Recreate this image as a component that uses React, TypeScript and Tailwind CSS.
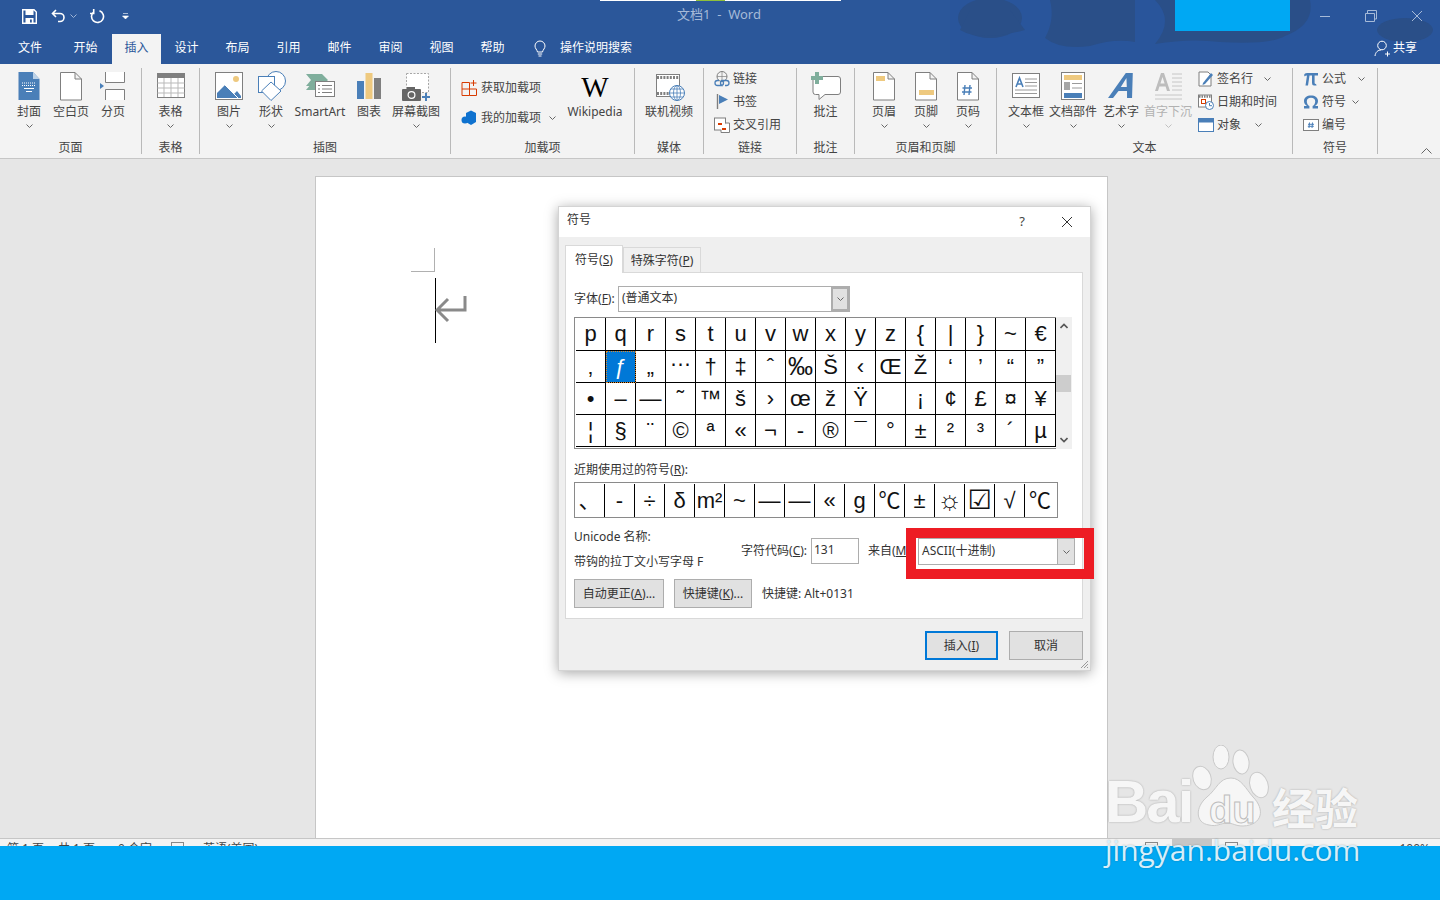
import React from 'react';

// small chevrons used all over the ribbon and dialog
function Chev({ className = 'text-[#666]' }: { className?: string }) {
  return (
    <svg width="7" height="4" viewBox="0 0 7 4" className={className}>
      <path d="M0.5 0.5 L3.5 3.5 L6.5 0.5" fill="none" stroke="currentColor" strokeWidth="1" />
    </svg>
  );
}

const BLUE = '#4a7fb8';
const GRAY = '#7f7f7f';
const TAN = '#eec97f';
const TEAL = '#7fae9c';

const icons: Record<string, React.ReactNode> = {
  cover: (
    <>
      <path d="M5.5 2 H20 L26.5 9 V30 H5.5 Z" fill={BLUE} />
      <path d="M20 2 L26.5 9 H20 Z" fill="#bcd2e8" />
      <path d="M9 13 H23 M9 15.5 H23" stroke="#fff" strokeWidth="1.2" strokeDasharray="1 1" />
      <path d="M11 18.5 H21 M13 21.5 H19" stroke="#fff" strokeWidth="1" />
    </>
  ),
  blank: <path d="M5.5 2.5 H20 L26.5 9 V30 H5.5 Z M20 2.5 V9 H26.5" fill="#fff" stroke={GRAY} />,
  pagebreak: (
    <>
      <path d="M8.5 2 V12.5 H27.5 V2" fill="#fff" stroke={GRAY} />
      <path d="M8.5 30 V19.5 H27.5 V30" fill="#fff" stroke={GRAY} />
      <path d="M3 13 L7 16 L3 19 Z" fill={BLUE} />
    </>
  ),
  table: (
    <>
      <rect x="2.5" y="3.5" width="27" height="24" fill="#fff" stroke={GRAY} />
      <rect x="2" y="3" width="28" height="5" fill={GRAY} />
      <path d="M2.5 13 H29.5 M2.5 18 H29.5 M2.5 23 H29.5 M9 8 V27 M16 8 V27 M23 8 V27" stroke="#b9b9b9" />
    </>
  ),
  picture: (
    <>
      <rect x="2.5" y="2.5" width="27" height="27" fill="#fff" stroke={GRAY} />
      <circle cx="23" cy="9" r="3" fill={TAN} />
      <path d="M4 28 V23 L12 15 L21 24 L24 21 L28 26 V28 Z" fill={BLUE} />
      <path d="M12 15 L25 28" stroke="#fff" />
    </>
  ),
  shape: (
    <>
      <circle cx="21" cy="11" r="9.5" fill="#fff" stroke={BLUE} />
      <rect x="3.5" y="6.5" width="16" height="16" fill="#fff" stroke={BLUE} />
      <path d="M16 12 L26 21 L16 30.5 L6.5 21 Z" fill="#fff" stroke={BLUE} />
    </>
  ),
  smartart: (
    <>
      <path d="M2 4 H18 L24 10 L18 16 H2 L7 10 Z" fill={TEAL} />
      <path d="M2 20 L7 14 H12 V20 Z" fill={TEAL} />
      <rect x="11.5" y="11.5" width="19" height="15" fill="#fff" stroke={GRAY} />
      <path d="M14 15.5 H16 M18 15.5 H28 M14 19 H16 M18 19 H28 M14 22.5 H16 M18 22.5 H28" stroke={GRAY} />
    </>
  ),
  chart: (
    <>
      <rect x="4" y="11" width="7" height="18" fill={BLUE} />
      <rect x="12.5" y="3" width="7" height="26" fill={TAN} />
      <rect x="21" y="8" width="7" height="21" fill={GRAY} />
    </>
  ),
  screenshot: (
    <>
      <rect x="6.5" y="3.5" width="22" height="19" fill="#fff" stroke="#a6a6a6" strokeDasharray="2 1.5" />
      <rect x="2" y="19" width="19" height="12" rx="1" fill="#666" />
      <rect x="7" y="17" width="8" height="3" fill="#666" />
      <circle cx="11.5" cy="25" r="3.4" fill="#666" stroke="#fff" strokeWidth="1.2" />
      <path d="M22 27 H30 M26 23 V31" stroke={BLUE} strokeWidth="2" />
    </>
  ),
  video: (
    <>
      <rect x="3.5" y="4.5" width="23" height="22" fill="#fff" stroke={GRAY} />
      <path d="M4 7.5 H26 M4 23.5 H26" stroke={GRAY} strokeWidth="3" strokeDasharray="2 1.2" />
      <circle cx="24" cy="23" r="7.5" fill="#fff" stroke={BLUE} />
      <path d="M16.5 23 H31.5 M24 15.5 V30.5 M18 19 H30 M18 27 H30" stroke={BLUE} strokeWidth="0.8" />
      <ellipse cx="24" cy="23" rx="3.5" ry="7.5" fill="none" stroke={BLUE} strokeWidth="0.8" />
    </>
  ),
  comment: (
    <>
      <path d="M5.5 6.5 H28 Q30.5 6.5 30.5 9 V22 Q30.5 24.5 28 24.5 H15 L9 29.5 V24.5 H5.5 Q3 24.5 3 22 V9 Q3 6.5 5.5 6.5 Z" fill="#fff" stroke={GRAY} />
      <path d="M1 8 H13 M7 2 V14" stroke={TEAL} strokeWidth="4" />
    </>
  ),
  header: (
    <>
      <path d="M5.5 2.5 H20 L26.5 9 V30 H5.5 Z M20 2.5 V9 H26.5" fill="#fff" stroke={GRAY} />
      <rect x="8" y="6" width="9" height="5" fill={TAN} />
    </>
  ),
  footer: (
    <>
      <path d="M5.5 2.5 H20 L26.5 9 V30 H5.5 Z M20 2.5 V9 H26.5" fill="#fff" stroke={GRAY} />
      <rect x="9" y="20" width="15" height="5" fill={TAN} />
    </>
  ),
  pageno: (
    <>
      <path d="M5.5 2.5 H20 L26.5 9 V30 H5.5 Z M20 2.5 V9 H26.5" fill="#fff" stroke={GRAY} />
      <path d="M13 15 L12 25 M18 15 L17 25 M10.5 18 H20 M10 22 H19.5" stroke={BLUE} strokeWidth="1.4" />
    </>
  ),
  textbox: (
    <>
      <rect x="2.5" y="3.5" width="27" height="24" fill="#fff" stroke={GRAY} />
      <path d="M6 17 L9.5 8 L13 17 M7.2 14 H11.8" fill="none" stroke={BLUE} strokeWidth="1.6" />
      <path d="M15 9 H27 M15 12.5 H27 M15 16 H27 M5 20 H27 M5 23.5 H27" stroke="#9a9a9a" />
    </>
  ),
  parts: (
    <>
      <rect x="4.5" y="2.5" width="23" height="27" fill="#fff" stroke={GRAY} />
      <rect x="7" y="5" width="18" height="5" fill={TAN} />
      <rect x="7" y="12" width="6" height="8" fill="#a6a6a6" />
      <path d="M15 13.5 H25 M15 18 H25" stroke="#9a9a9a" />
      <rect x="7" y="23" width="18" height="5" fill={BLUE} />
    </>
  ),
  wordart: (
    <path d="M19 3 H26 L27 28 H22 L21.5 21 H13 L8 28 H3 Z M20 8 L15 17 H21 Z" fill={BLUE} fillRule="evenodd" transform="skewX(-4) translate(2 0)" />
  ),
  dropcap: (
    <>
      <path d="M3 21 L9 3 H12 L18 21 H15 L13.6 16.5 H7.4 L6 21 Z M8.4 13.5 H12.6 L10.5 7 Z" fill="#bdbdbd" fillRule="evenodd" />
      <path d="M20 4 H30 M20 8 H30 M20 12 H30 M20 16 H30 M20 20 H30 M3 25 H30 M3 29 H30" stroke="#c6c6c6" />
    </>
  ),
};

function Big({ icon, label, w = 42, chev = true, dim = false }: { icon: string; label: string; w?: number; chev?: boolean; dim?: boolean }) {
  return (
    <div className="flex flex-col items-center pt-[2px] shrink-0" style={{ width: w }}>
      <svg width="32" height="32" viewBox="0 0 32 32">{icons[icon]}</svg>
      <div className={`h-[17px] mt-[1px] leading-[17px] whitespace-nowrap ${dim ? 'text-[#b1b1b1]' : ''}`}>{label}</div>
      {chev && (
        <div className="mt-[4px] leading-none">
          <Chev className={dim ? 'text-[#c0c0c0]' : 'text-[#666]'} />
        </div>
      )}
    </div>
  );
}

function Small({ icon, label, chevGap, gap = 3 }: { icon: React.ReactNode; label: string; chevGap?: number; gap?: number }) {
  return (
    <div className="flex items-center h-[20px]">
      <svg width="16" height="16" viewBox="0 0 16 16" className="shrink-0">{icon}</svg>
      <span className="leading-[20px] whitespace-nowrap" style={{ marginLeft: gap }}>{label}</span>
      {chevGap !== undefined && (
        <span className="flex" style={{ marginLeft: chevGap }}>
          <Chev />
        </span>
      )}
    </div>
  );
}

function Group({ w, label, className = '', children }: { w: number; label: string; className?: string; children: React.ReactNode }) {
  return (
    <div className="flex flex-col h-[86px] mt-1 border-r border-[#b9b9b9] shrink-0" style={{ width: w }}>
      <div className={`flex h-[70px] ${className}`}>{children}</div>
      <div className="text-center leading-[19px] h-[16px]">{label}</div>
    </div>
  );
}

const tabs: [string, number][] = [
  ['文件', 60], ['开始', 52], ['插入', 49], ['设计', 51], ['布局', 51], ['引用', 51], ['邮件', 51], ['审阅', 51], ['视图', 51], ['帮助', 51],
];

function TitleBar() {
  return (
    <div className="relative h-[64px] bg-[#2b579a] text-white overflow-hidden shrink-0">
      {/* cloud backdrop of the office theme */}
      <svg className="absolute left-[950px] top-0" width="490" height="64" viewBox="0 0 490 64">
        <rect x="0" y="0" width="490" height="64" fill="#29559b" />
        <g fill="#2a4f88">
          <ellipse cx="40" cy="18" rx="32" ry="20" />
          <path d="M10 30 Q30 42 75 30 L60 10 L20 10 Z" />
          <path d="M100 0 H185 V42 Q165 38 140 46 Q110 50 95 38 Q105 20 100 0 Z" />
          <path d="M205 0 H360 Q365 25 335 36 Q320 45 270 42 Q240 38 205 44 Q225 20 205 0 Z" />
          <ellipse cx="455" cy="30" rx="28" ry="12" />
        </g>
      </svg>
      <div className="absolute left-[600px] top-0 w-[241px] h-[1px] bg-white" />
      <div className="absolute left-[696px] top-0 w-[29px] h-[1px] bg-[#8fbf3a]" />
      <div className="absolute left-[1175px] top-0 w-[115px] h-[31px] bg-[#00a8f3]" />

      {/* quick access + title + window buttons */}
      <div className="relative flex items-center h-[32px] pl-[22px]">
        <svg width="15" height="15" viewBox="0 0 15 15">
          <path d="M0.7 0.7 H12 L14.3 3 V14.3 H0.7 Z" fill="none" stroke="#fff" strokeWidth="1.4" />
          <rect x="3.5" y="1" width="8" height="5" fill="#fff" />
          <rect x="3.5" y="9" width="8" height="5" fill="#fff" />
          <rect x="8" y="10.5" width="1.8" height="3" fill="#2b579a" />
        </svg>
        <svg width="15" height="14" viewBox="0 0 15 14" className="ml-[14px]">
          <path d="M5 1 L1.5 4.5 L5 8 M2 4.5 H9 A4 4 0 0 1 9 12.5 H7" fill="none" stroke="#fff" strokeWidth="1.6" />
        </svg>
        <span className="flex ml-[4px]"><Chev className="text-[#9fb5d6]" /></span>
        <svg width="15" height="15" viewBox="0 0 15 15" className="ml-[13px]">
          <path d="M9.5 1.8 A6 6 0 1 1 4 2.6 M3.7 0 V4.5 H0" fill="none" stroke="#fff" strokeWidth="1.6" />
        </svg>
        <svg width="7" height="7" viewBox="0 0 7 7" className="ml-[17px]">
          <path d="M1 0.5 H6 M0.5 3 H6.5 L3.5 6 Z" fill="#fff" stroke="#fff" strokeWidth="0.6" />
        </svg>
        <div className="absolute left-[677px] top-[5px] text-[13px] leading-[18px] text-[#a6bad8] whitespace-pre">文档1  -  Word</div>
        <div className="ml-auto flex items-center text-[#a6bad8]">
          <svg width="46" height="14" viewBox="0 0 46 14"><path d="M18 7.5 H28" stroke="currentColor" /></svg>
          <svg width="46" height="14" viewBox="0 0 46 14" className="-ml-[1px]"><path d="M18.5 4.5 H27.5 V12.5 H18.5 Z M20.5 4 V1.5 H29.5 V10 H27.5" fill="none" stroke="currentColor" /></svg>
          <svg width="46" height="14" viewBox="0 0 46 14" className="ml-[1px]"><path d="M18 2 L28 12 M28 2 L18 12" stroke="currentColor" /></svg>
        </div>
      </div>

      {/* tab strip */}
      <div className="relative flex h-[32px] text-[12px]">
        {tabs.map(([t, w]) => (
          <div
            key={t}
            style={{ width: w }}
            className={`text-center shrink-0 ${t === '插入' ? 'bg-[#f3f3f3] text-[#2b579a] mt-[2px] h-[30px] leading-[28px]' : 'leading-[32px]'} ${t === '开始' ? 'pr-[1px]' : ''}`}
          >
            {t}
          </div>
        ))}
        <svg width="16" height="18" viewBox="0 0 16 18" className="ml-[14px] mt-[8px]">
          <path d="M5.5 12 C5 9.5 3 8.5 3 6 A5 5 0 0 1 13 6 C13 8.5 11 9.5 10.5 12 Z M5.8 14 H10.2 M6.5 16 H9.5" fill="none" stroke="#fff" />
        </svg>
        <div className="ml-[12px] leading-[32px]">操作说明搜索</div>
        <div className="ml-auto flex items-center h-[32px] pr-[23px]">
          <svg width="17" height="17" viewBox="0 0 17 17">
            <circle cx="8" cy="5.5" r="4.3" fill="none" stroke="#fff" />
            <path d="M1 16 C1.5 12 4 10 7 10 M11 14 H16 M13.5 11.5 V16.5" fill="none" stroke="#fff" />
          </svg>
          <span className="ml-[2px] leading-[32px]">共享</span>
        </div>
      </div>
    </div>
  );
}

function Ribbon() {
  return (
    <div className="relative flex h-[95px] bg-[#f3f3f3] border-b border-[#c6c6c6] text-[12px] text-[#444] shrink-0">
      <Group w={142} label="页面" className="pl-[8px]">
        <Big icon="cover" label="封面" />
        <Big icon="blank" label="空白页" chev={false} />
        <Big icon="pagebreak" label="分页" chev={false} />
      </Group>
      <Group w={58} label="表格" className="justify-center">
        <Big icon="table" label="表格" />
      </Group>
      <Group w={251} label="插图" className="pl-[8px]">
        <Big icon="picture" label="图片" />
        <Big icon="shape" label="形状" />
        <Big icon="smartart" label="SmartArt" w={56} chev={false} />
        <Big icon="chart" label="图表" chev={false} />
        <Big icon="screenshot" label="屏幕截图" w={52} />
      </Group>
      <Group w={184} label="加载项" className="pl-[10px]">
        <div className="flex flex-col gap-[10px] pt-[10px] w-[103px] shrink-0">
          <Small
            gap={4}
            label="获取加载项"
            icon={<path d="M1 2.5 H8.5 V15.5 H1 Z M1 9 H15.5 V15.5 H8.5 M12.5 0 V6 M9.5 3 H15.5" fill="none" stroke="#d83b01" />}
          />
          <Small
            gap={4}
            label="我的加载项"
            chevGap={8}
            icon={
              <>
                <path d="M5 3 L10 0.5 L15 3 V12 L10 15 L5 12 Z" fill="#0f72cf" />
                <circle cx="4" cy="10" r="3.5" fill="#0f72cf" />
              </>
            }
          />
        </div>
        <div className="flex flex-col items-center w-[62px] pt-[2px] shrink-0">
          <div className="h-[32px] text-[29px] leading-[34px] text-black font-['Liberation_Serif',serif]">W</div>
          <div className="h-[17px] mt-[1px] leading-[17px]">Wikipedia</div>
        </div>
      </Group>
      <Group w={69} label="媒体" className="justify-center">
        <Big icon="video" label="联机视频" chev={false} />
      </Group>
      <Group w={93} label="链接" className="pl-[10px]">
        <div className="flex flex-col gap-[3px] pt-[1px]">
          <Small
            label="链接"
            icon={
              <>
                <circle cx="8" cy="5.5" r="5" fill="none" stroke={GRAY} />
                <path d="M3 5.5 H13 M8 .5 V10" stroke={GRAY} strokeWidth="0.7" />
                <path d="M5 9.5 H3.5 A2.5 2.5 0 0 0 3.5 14.5 H7 A2.5 2.5 0 0 0 7 9.5 M11 14.5 H12.5 A2.5 2.5 0 0 0 12.5 9.5 H9 A2.5 2.5 0 0 0 9 14.5" fill="none" stroke={BLUE} strokeWidth="1.3" />
              </>
            }
          />
          <Small
            label="书签"
            icon={
              <>
                <path d="M3.5 0 V15" stroke={GRAY} strokeWidth="1.4" />
                <path d="M5 1 L14 5.5 L5 10 Z" fill={BLUE} />
              </>
            }
          />
          <Small
            label="交叉引用"
            icon={
              <>
                <rect x="0.5" y="1" width="11" height="12" fill="#fff" stroke={GRAY} />
                <path d="M12 6 H15.5 V15.5 H7 V13" fill="#fff" stroke={GRAY} />
                <path d="M4 7 H8 M8 12 H12" stroke="#d83b01" strokeWidth="2" />
              </>
            }
          />
        </div>
      </Group>
      <Group w={58} label="批注" className="justify-center">
        <Big icon="comment" label="批注" chev={false} />
      </Group>
      <Group w={142} label="页眉和页脚" className="pl-[8px]">
        <Big icon="header" label="页眉" />
        <Big icon="footer" label="页脚" />
        <Big icon="pageno" label="页码" />
      </Group>
      <Group w={296} label="文本" className="pl-[6px]">
        <Big icon="textbox" label="文本框" w={46} />
        <Big icon="parts" label="文档部件" w={48} />
        <Big icon="wordart" label="艺术字" w={48} />
        <Big icon="dropcap" label="首字下沉" w={46} dim />
        <div className="flex flex-col gap-[3px] ml-[7px] pt-[1px]">
          <Small
            label="签名行"
            chevGap={11}
            icon={
              <>
                <path d="M1 1 H10 L13 4 V15 H1 Z" fill="#fff" stroke={GRAY} />
                <path d="M5 12 L13 2 L15 4 L7 13 L4.5 14 Z" fill={BLUE} />
              </>
            }
          />
          <Small
            label="日期和时间"
            icon={
              <>
                <rect x="0.5" y="1" width="13" height="12" fill="#fff" stroke={GRAY} />
                <path d="M1 2.5 H13" stroke={GRAY} strokeWidth="2.4" strokeDasharray="1.5 1" />
                <rect x="3.5" y="5.5" width="4" height="4" fill="none" stroke="#d83b01" />
                <circle cx="11.5" cy="11.5" r="4" fill="#fff" stroke={BLUE} />
                <path d="M11.5 9 V11.7 H14" fill="none" stroke={BLUE} />
              </>
            }
          />
          <Small
            label="对象"
            chevGap={14}
            icon={
              <>
                <rect x="0.5" y="1.5" width="15" height="13" fill="#fff" stroke={BLUE} />
                <rect x="0.5" y="1.5" width="15" height="4" fill={BLUE} />
              </>
            }
          />
        </div>
      </Group>
      <Group w={85} label="符号" className="pl-[10px]">
        <div className="flex flex-col gap-[3px] pt-[1px]">
          <Small
            label="公式"
            gap={3}
            chevGap={12}
            icon={<path d="M1 4 Q1.5 2 4 2 H15 V4.5 H11.6 V12 Q11.6 13 13 13 L13.6 14.6 H11 Q9 14.6 9 12 V4.5 H6.5 L5 14.6 H2.5 L4 4.5 Q2 4.5 1.8 5.5 Z" fill={BLUE} />}
          />
          <Small
            label="符号"
            gap={3}
            chevGap={6}
            icon={<path d="M1 14.5 V12 H4 C1.5 10.5 1 8.8 1 7 C1 3.5 4 1.5 8 1.5 C12 1.5 15 3.5 15 7 C15 8.8 14.5 10.5 12 12 H15 V14.5 H9.6 V12 C11.5 11 12.2 9 12.2 7.2 C12.2 5 10.6 3.8 8 3.8 C5.4 3.8 3.8 5 3.8 7.2 C3.8 9 4.5 11 6.4 12 V14.5 Z" fill={BLUE} />}
          />
          <Small
            label="编号"
            gap={3}
            icon={
              <>
                <rect x="0.5" y="2.5" width="15" height="11" fill="#fff" stroke={GRAY} />
                <path d="M6.5 5.5 L6 11 M9.5 5.5 L9 11 M5 7.3 H11 M4.8 9.3 H10.8" stroke={BLUE} />
              </>
            }
          />
        </div>
      </Group>
      <svg width="11" height="6" viewBox="0 0 11 6" className="absolute left-[1421px] top-[84px]">
        <path d="M0.5 5.5 L5.5 0.5 L10.5 5.5" fill="none" stroke="#666" />
      </svg>
    </div>
  );
}

const symbolRows = [
  ['p', 'q', 'r', 's', 't', 'u', 'v', 'w', 'x', 'y', 'z', '{', '|', '}', '~', '€'],
  ['‚', 'ƒ', '„', '…', '†', '‡', 'ˆ', '‰', 'Š', '‹', 'Œ', 'Ž', '‘', '’', '“', '”'],
  ['•', '–', '—', '˜', '™', 'š', '›', 'œ', 'ž', 'Ÿ', ' ', '¡', '¢', '£', '¤', '¥'],
  ['¦', '§', '¨', '©', 'ª', '«', '¬', '-', '®', '¯', '°', '±', '²', '³', '´', 'µ'],
];
const recent = ['、', '-', '÷', 'δ', 'm²', '~', '—', '—', '«', 'g', '℃', '±', '☼', '☑', '√', '℃'];

// label with an underlined access key
function Key({ before, k, after }: { before: string; k: string; after: string }) {
  return (
    <span className="whitespace-nowrap">
      {before}(<span className="underline">{k}</span>){after}
    </span>
  );
}

function SymbolDialog() {
  return (
    <div className="absolute left-[558px] top-[206px] w-[533px] h-[465px] bg-[#efefef] border border-[#d4d4d4] shadow-[0_2px_12px_rgba(0,0,0,0.35)] text-[12px] text-[#333] flex flex-col">
      <div className="flex items-center h-[30px] bg-white pl-[8px] shrink-0">
        <span className="leading-[24px] h-[28px]">符号</span>
        <span className="ml-auto mr-[36px] text-[13px] text-[#444]">?</span>
        <svg width="12" height="12" viewBox="0 0 12 12" className="mr-[17px]">
          <path d="M1 1 L11 11 M11 1 L1 11" stroke="#333" />
        </svg>
      </div>

      <div className="flex items-end h-[35px] pl-[6px] shrink-0">
        <div className="w-[58px] h-[28px] bg-white border border-b-0 border-[#d9d9d9] text-center leading-[27px] relative top-[1px]">
          <Key before="符号" k="S" after="" />
        </div>
        <div className="w-[78px] h-[25px] bg-[#f0f0f0] border border-b-0 border-[#d9d9d9] text-center leading-[26px]">
          <Key before="特殊字符" k="P" after="" />
        </div>
      </div>

      <div className="mx-[6px] w-[518px] h-[347px] bg-white border border-[#d9d9d9] pl-[8px] pt-[13px] shrink-0">
        <div className="flex items-center h-[26px]">
          <span className="w-[44px]"><Key before="字体" k="F" after=":" /></span>
          <div className="flex w-[232px] h-[26px] border border-[#adadad] pl-[3px] leading-[22px]">
            <span className="flex-1">(普通文本)</span>
            <div className="w-[18px] border-2 border-[#adadad] bg-[#e1e1e1] flex items-center justify-center">
              <Chev />
            </div>
          </div>
        </div>

        <div className="flex mt-[5px]">
          <div className="w-[482px] border border-r-0 border-[#8a8a8a] pb-[1px] pl-[1px]">
            {symbolRows.map((row, r) => (
              <div key={r} className={`flex ${r === 0 ? 'h-[33px]' : 'h-[32px]'}`}>
                {row.map((c, i) => {
                  const sel = c === 'ƒ';
                  return (
                    <div
                      key={i}
                      className={`w-[30px] shrink-0 border-r border-b border-black flex items-center justify-center overflow-hidden leading-none font-['Liberation_Sans',sans-serif] ${c === '‰' ? 'text-[25px]' : 'text-[22px]'} ${sel ? 'bg-[#0078d7] text-white outline-1 -outline-offset-1 outline-dotted outline-[#e08a2c]' : 'text-[#111]'}`}
                    >
                      <span className={c === '…' ? '-translate-y-[8px]' : ''}>{c}</span>
                    </div>
                  );
                })}
              </div>
            ))}
          </div>
          <div className="w-[16px] h-[132px] bg-[#f0f0f0] flex flex-col items-center justify-between py-[6px] relative">
            <svg width="8" height="6" viewBox="0 0 8 6"><path d="M0.5 5 L4 1.5 L7.5 5" fill="none" stroke="#555" strokeWidth="1.6" /></svg>
            <div className="absolute left-0 top-[58px] w-[15px] h-[17px] bg-[#cdcdcd]" />
            <svg width="8" height="6" viewBox="0 0 8 6"><path d="M0.5 1 L4 4.5 L7.5 1" fill="none" stroke="#555" strokeWidth="1.6" /></svg>
          </div>
        </div>

        <div className="mt-[13px] h-[16px] leading-[16px]">
          <Key before="近期使用过的符号" k="R" after=":" />
        </div>
        <div className="flex mt-[4px] w-[484px] h-[36px] border border-[#8a8a8a]">
          {recent.map((c, i) => (
            <div
              key={i}
              className={`w-[30px] shrink-0 h-[33px] mt-[1px] flex items-center justify-center overflow-hidden leading-none text-[#111] font-['Liberation_Sans','Noto_Sans_CJK_SC','DejaVu_Sans',sans-serif] ${i === 12 || i === 13 ? 'text-[27px] font-bold' : 'text-[22px]'} ${i < 15 ? 'border-r border-black' : ''}`}
            >
              {c}
            </div>
          ))}
        </div>

        <div className="flex mt-[11px] h-[42px]">
          <div className="w-[167px] shrink-0 leading-[16px]">
            <div>Unicode 名称:</div>
            <div className="mt-[9px] whitespace-nowrap">带钩的拉丁文小写字母 F</div>
          </div>
          <div className="flex items-start pt-[9px]">
            <span className="leading-[26px] w-[70px]"><Key before="字符代码" k="C" after=":" /></span>
            <div className="w-[48px] h-[26px] border border-[#adadad] pl-[2px] leading-[22px]">131</div>
            <span className="leading-[26px] ml-[9px] mr-[10px] w-[40px] overflow-hidden whitespace-nowrap shrink-0">来自(<span className="underline">M</span></span>
            <div className="flex w-[157px] h-[27px] border border-[#adadad] pl-[3px] leading-[24px] shrink-0">
              <span className="flex-1">ASCII(十进制)</span>
              <div className="w-[17px] bg-[#e1e1e1] border-l border-[#adadad] flex items-center justify-center">
                <Chev />
              </div>
            </div>
          </div>
        </div>

        <div className="flex items-center mt-[8px] h-[29px]">
          <div className="w-[90px] h-[29px] bg-[#e1e1e1] border border-[#adadad] text-center leading-[27px]">
            <Key before="自动更正" k="A" after="..." />
          </div>
          <div className="w-[78px] h-[29px] ml-[10px] bg-[#e1e1e1] border border-[#adadad] text-center leading-[27px]">
            <Key before="快捷键" k="K" after="..." />
          </div>
          <span className="ml-[10px] leading-[16px]">快捷键: Alt+0131</span>
        </div>
      </div>

      <div className="flex justify-end gap-[11px] pr-[7px] pt-[12px]">
        <div className="w-[73px] h-[29px] bg-[#e1e1e1] border-2 border-[#0078d7] text-center leading-[26px]">
          <Key before="插入" k="I" after="" />
        </div>
        <div className="w-[74px] h-[29px] bg-[#e1e1e1] border border-[#adadad] text-center leading-[27px]">取消</div>
      </div>

      <svg width="9" height="9" viewBox="0 0 9 9" className="absolute right-[1px] bottom-[1px]">
        <path d="M1 8 L8 1 M4 8 L8 4 M7 8 L8 7" stroke="#9a9a9a" />
      </svg>

      {/* red highlight added on the screenshot */}
      <div className="absolute left-[347px] top-[321px] w-[188px] h-[51px] border-[10px] border-[#ed1c24]" />
    </div>
  );
}

function Watermark() {
  const paw = '#f6f6f6';
  return (
    <div className="absolute left-[1105px] top-[745px] w-[270px] h-[130px] pointer-events-none">
      <div className="absolute left-0 top-[22px] text-[60px] leading-[70px] font-bold tracking-[-2px] text-[#f6f6f6] font-['Liberation_Sans',sans-serif] [text-shadow:0_0_2px_rgba(0,0,0,0.3)]">
        Bai
      </div>
      <svg className="absolute left-[86px] top-0" width="82" height="84" viewBox="0 0 82 84">
        <g fill={paw} stroke="#c9c9c9" strokeWidth="1">
          <ellipse cx="30" cy="12" rx="8" ry="12" />
          <ellipse cx="50" cy="17" rx="8" ry="12" transform="rotate(-8 50 17)" />
          <ellipse cx="11" cy="33" rx="9" ry="12" transform="rotate(-20 11 33)" />
          <ellipse cx="68" cy="40" rx="9" ry="13" transform="rotate(-18 68 40)" />
          <path d="M40 33 C50 33 55 44 62 52 C74 64 72 80 52 81 C44 81 42 78 36 78 C30 78 26 82 18 80 C4 78 4 62 16 52 C26 44 28 33 40 33 Z" />
        </g>
      </svg>
      <div className="absolute left-[104px] top-[40px] text-[38px] leading-[50px] font-bold text-[#f6f6f6] [-webkit-text-stroke:1px_#bdbdbd] font-['Liberation_Sans',sans-serif]">
        du
      </div>
      <div className="absolute left-[167px] top-[35px] text-[43px] leading-[52px] font-bold whitespace-nowrap text-[#f6f6f6] [text-shadow:0_0_2px_rgba(0,0,0,0.3)] font-['Noto_Sans_CJK_SC',sans-serif]">
        经验
      </div>
      <div className="absolute left-0 top-[85px] text-[30px] leading-[40px] whitespace-nowrap text-[#d6eefa] font-['Open_Sans',sans-serif] [text-shadow:0_0_2px_rgba(0,0,0,0.25)]">
        jingyan.baidu.com
      </div>
    </div>
  );
}

function StatusBar() {
  return (
    <div className="flex h-[8px] bg-[#f3f3f3] border-t border-[#c6c6c6] text-[12px] leading-[16px] text-[#444] overflow-hidden pl-[7px] shrink-0 whitespace-pre">
      <span className="mt-[2px] w-[51px]">第 1 页</span>
      <span className="mt-[2px] w-[60px]">共 1 页</span>
      <span className="mt-[2px] w-[53px]">0 个字</span>
      <span className="mt-[3px] w-[13px] h-[12px] border border-[#888]" />
      <span className="mt-[2px] ml-[19px]">英语(美国)</span>
      <span className="ml-auto flex">
        <span className="w-[13px] h-[12px] mt-[3px] border border-[#888]" />
        <span className="w-[40px] h-[8px] ml-[14px] bg-[#c6c6c6]" />
        <span className="w-[13px] h-[12px] mt-[3px] ml-[13px] border border-[#888]" />
        <span className="w-[161px]" />
        <span className="mt-[2px] mr-[10px]">100%</span>
      </span>
    </div>
  );
}

export default function App() {
  return (
    <div className="relative flex flex-col w-[1440px] h-[900px] overflow-hidden bg-[#e6e6e6] font-['Noto_Sans','Noto_Sans_CJK_SC',sans-serif]">
      <TitleBar />
      <Ribbon />
      <div className="flex-1 flex justify-center pt-[17px] pr-[17px] min-h-0">
        <div className="w-[793px] h-full bg-white border border-b-0 border-[#c6c6c6] pl-[95px] pt-[71px]">
          <div className="w-[24px] h-[24px] border-r border-b border-[#b0b0b0]" />
          <div className="flex mt-[6px] h-[65px]">
            <div className="ml-[24px] w-[1px] bg-black" />
            <svg width="32" height="28" viewBox="0 0 32 28" className="mt-[17px] -ml-[1px]">
              <path d="M30 1 V15 H3 M13 4 L2 15 L13 26" fill="none" stroke="#8a8a8a" strokeWidth="3" />
            </svg>
          </div>
        </div>
      </div>
      <StatusBar />
      <div className="h-[54px] bg-[#00a8f3] shrink-0" />
      <SymbolDialog />
      <Watermark />
    </div>
  );
}
